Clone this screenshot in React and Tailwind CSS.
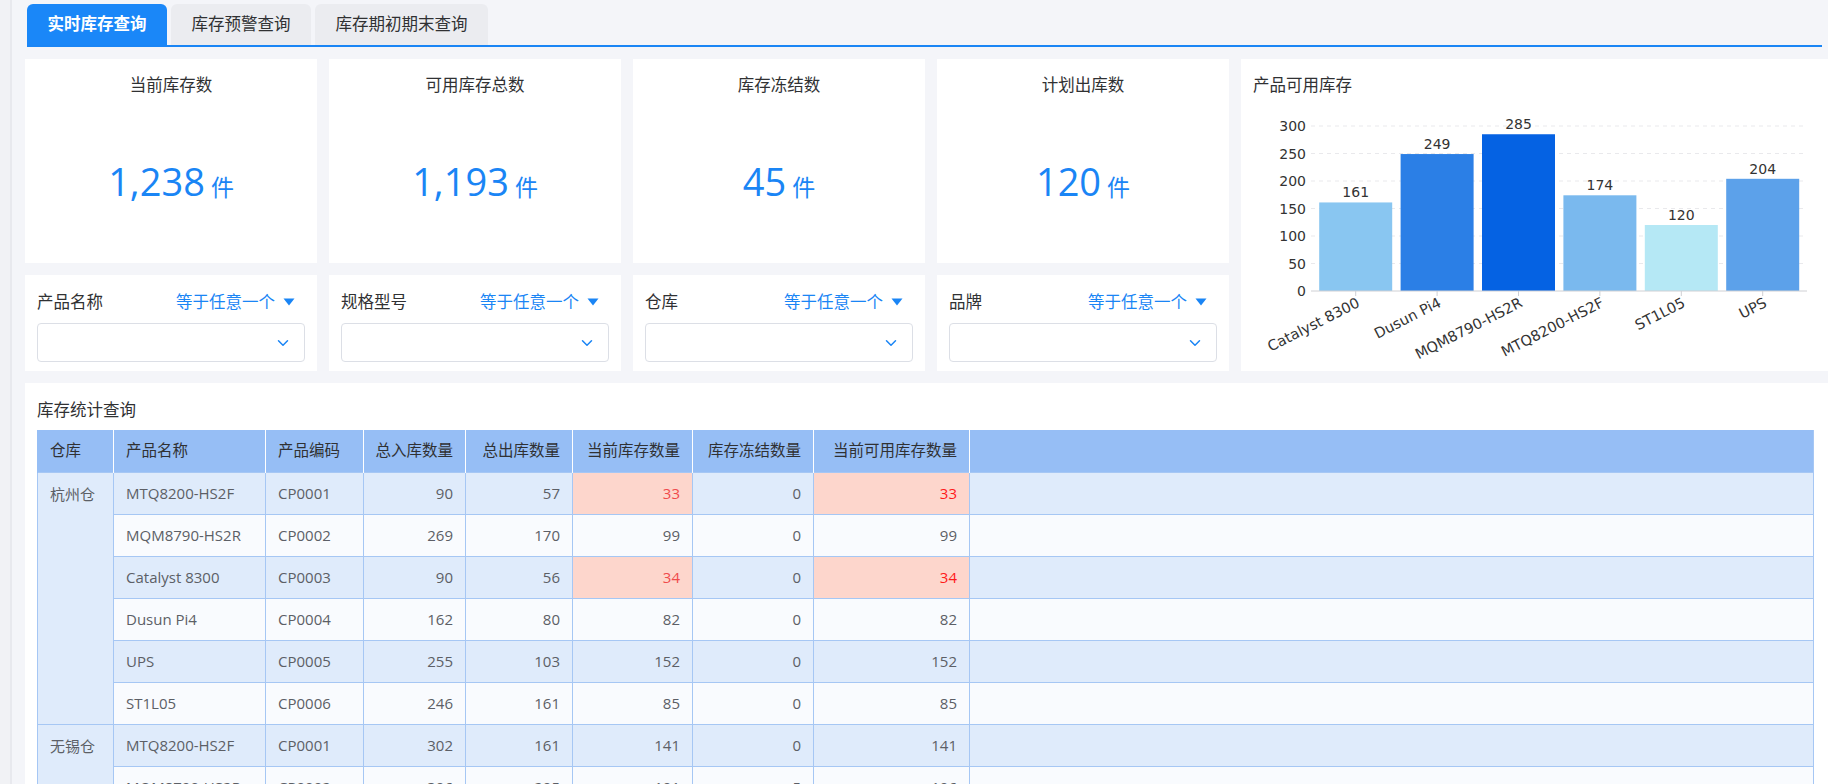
import React from 'react';
import { ChevronDown } from 'lucide-react';

const FONT = { fontFamily: '"Open Sans", "Noto Sans CJK SC", sans-serif' };

const tabs = ['实时库存查询', '库存预警查询', '库存期初期末查询'];

const stats = [
  { title: '当前库存数', value: '1,238' },
  { title: '可用库存总数', value: '1,193' },
  { title: '库存冻结数', value: '45' },
  { title: '计划出库数', value: '120' },
];

const filters = ['产品名称', '规格型号', '仓库', '品牌'];

const chartData = [
  { name: 'Catalyst 8300', value: 161, color: '#89c6f1' },
  { name: 'Dusun Pi4', value: 249, color: '#2b7fe6' },
  { name: 'MQM8790-HS2R', value: 285, color: '#0562e3' },
  { name: 'MTQ8200-HS2F', value: 174, color: '#7ab9ee' },
  { name: 'ST1L05', value: 120, color: '#b5e8f5' },
  { name: 'UPS', value: 204, color: '#5ca1ea' },
];

const groups = [
  {
    warehouse: '杭州仓',
    rows: [
      ['MTQ8200-HS2F', 'CP0001', 90, 57, 33, 0, 33, true],
      ['MQM8790-HS2R', 'CP0002', 269, 170, 99, 0, 99, false],
      ['Catalyst 8300', 'CP0003', 90, 56, 34, 0, 34, true],
      ['Dusun Pi4', 'CP0004', 162, 80, 82, 0, 82, false],
      ['UPS', 'CP0005', 255, 103, 152, 0, 152, false],
      ['ST1L05', 'CP0006', 246, 161, 85, 0, 85, false],
    ],
  },
  {
    warehouse: '无锡仓',
    rows: [
      ['MTQ8200-HS2F', 'CP0001', 302, 161, 141, 0, 141, false],
      ['MQM8790-HS2R', 'CP0002', 306, 205, 101, 5, 106, false],
    ],
  },
];

const headers = [
  { label: '仓库', align: 'left' },
  { label: '产品名称', align: 'left' },
  { label: '产品编码', align: 'left' },
  { label: '总入库数量', align: 'right' },
  { label: '总出库数量', align: 'right' },
  { label: '当前库存数量', align: 'right' },
  { label: '库存冻结数量', align: 'right' },
  { label: '当前可用库存数量', align: 'right' },
  { label: '', align: 'left' },
];

function StatCard({ title, value }) {
  return (
    <div className="flex flex-col items-center bg-white">
      <div className="pt-[14px] text-[16.5px] leading-[24px] text-[#303133]">{title}</div>
      <div className="mt-[60px] flex items-baseline gap-[6px] text-[#1a85f5]">
        <span className="text-[38px] leading-[48px]">{value}</span>
        <span className="text-[23px] leading-[30px]">件</span>
      </div>
    </div>
  );
}

function FilterCard({ label }) {
  return (
    <div className="flex flex-col bg-white px-[12px] pt-[16px]">
      <div className="flex h-[22px] items-center justify-between pr-[10px] text-[16.5px]">
        <span className="text-[#303133]">{label}</span>
        <span className="flex items-center gap-[8px] text-[#1a85f5]">
          等于任意一个
          <svg width="12" height="8" viewBox="0 0 12 8">
            <path d="M0.5 0.5 L11.5 0.5 L6 7.5 Z" fill="#1a85f5" />
          </svg>
        </span>
      </div>
      <div className="mt-[10px] flex h-[39px] items-center justify-end rounded-[4px] border border-[#dcdfe6] pr-[12px]">
        <ChevronDown size={18} strokeWidth={2} color="#1a85f5" />
      </div>
    </div>
  );
}

function ChartCard() {
  const y0 = 194;
  const k = 0.55;
  const left = 74;
  const step = 81.4;
  const barW = 73;
  const ticks = [0, 50, 100, 150, 200, 250, 300];
  const chartFont = '"DejaVu Sans", Verdana, sans-serif';
  return (
    <div className="col-start-5 row-span-2 row-start-1 flex flex-col bg-white">
      <div className="pl-[12px] pt-[14px] text-[16.5px] leading-[24px] text-[#303133]">产品可用库存</div>
      <svg width="587" height="274" viewBox="0 0 587 274" style={{ fontFamily: chartFont }}>
        {ticks.map((t) => (
          <g key={t}>
            {t > 0 && (
              <line x1="70" x2="566" y1={y0 - t * k} y2={y0 - t * k} stroke="#e9e9ec" strokeDasharray="4 4" />
            )}
            <text x="65" y={y0 - t * k} textAnchor="end" dominantBaseline="central" fontSize="14" fill="#333">
              {t}
            </text>
          </g>
        ))}
        {chartData.map((d, i) => {
          const cx = left + step * (i + 0.5);
          const top = y0 - d.value * k;
          return (
            <g key={d.name}>
              <rect x={cx - barW / 2} y={top} width={barW} height={d.value * k} fill={d.color} />
              <text x={cx} y={top - 5} textAnchor="middle" fontSize="14" fill="#333">
                {d.value}
              </text>
              <line x1={cx} x2={cx} y1={y0} y2={y0 + 5} stroke="#cfd0d4" />
              <text
                transform={`translate(${cx + 5} ${y0 + 15}) rotate(-27)`}
                textAnchor="end"
                fontSize="14.5"
                fill="#333"
              >
                {d.name}
              </text>
            </g>
          );
        })}
        <line x1="70" x2="566" y1={y0} y2={y0} stroke="#cfd0d4" />
      </svg>
    </div>
  );
}

function StockTable() {
  const widths = [76, 152, 98, 102, 107, 120, 121, 156];
  let rowIndex = 0;
  return (
    <table className="w-full table-fixed border-collapse text-[15px]">
      <colgroup>
        {widths.map((w, i) => (
          <col key={i} style={{ width: w }} />
        ))}
        <col />
      </colgroup>
      <thead>
        <tr className="h-[42px] bg-[#96bef5] text-[15.5px] text-[#303133]">
          {headers.map((h, i) => (
            <th
              key={i}
              className={`whitespace-nowrap border-x border-white pl-[8px] pr-[12px] font-normal first:border-l-[#96bef5] first:pl-[12px] last:border-r-[#a6c7f4] ${
                h.align === 'right' ? 'text-right' : 'text-left pl-[12px]'
              }`}
            >
              {h.label}
            </th>
          ))}
        </tr>
      </thead>
      <tbody className="text-[#5c5f66]">
        {groups.map((g) =>
          g.rows.map((r, j) => {
            const striped = rowIndex % 2 === 0;
            rowIndex += 1;
            const base = striped ? 'bg-[#dfebfb]' : 'bg-[#f9fbfe]';
            const hot = r[7];
            const cell = 'whitespace-nowrap border border-[#a6c7f4] px-[12px]';
            return (
              <tr key={g.warehouse + j} className={`h-[42px] ${base}`}>
                {j === 0 && (
                  <td rowSpan={g.rows.length} className={`${cell} bg-[#dfebfb] pt-[10px] align-top`}>
                    {g.warehouse}
                  </td>
                )}
                <td className={cell}>{r[0]}</td>
                <td className={cell}>{r[1]}</td>
                <td className={`${cell} text-right`}>{r[2]}</td>
                <td className={`${cell} text-right`}>{r[3]}</td>
                <td className={`${cell} text-right ${hot ? 'bg-[#fdd6cc] text-[#f04b4b]' : ''}`}>{r[4]}</td>
                <td className={`${cell} text-right`}>{r[5]}</td>
                <td className={`${cell} text-right ${hot ? 'bg-[#fdd6cc] text-[#ff1a1a]' : ''}`}>{r[6]}</td>
                <td className={cell}></td>
              </tr>
            );
          })
        )}
      </tbody>
    </table>
  );
}

export default function App() {
  return (
    <div className="flex h-[784px] w-[1828px] overflow-hidden bg-[#f4f5f9]" style={FONT}>
      <div className="w-[12px] shrink-0 border-r-2 border-[#e8e9ee] bg-[#f1f2f5]" />
      <div className="flex min-w-0 flex-1 flex-col pl-[13px]">
        <div className="ml-[2px] mr-[6px] mt-[4px] flex gap-[4px] border-b-2 border-[#1a85f5]">
          {tabs.map((t, i) => (
            <div
              key={t}
              className={`flex h-[41px] items-center justify-center rounded-t-[6px] text-[16.5px] ${
                i === 0
                  ? 'w-[140px] bg-[#1a87f8] font-bold text-white'
                  : i === 1
                  ? 'w-[140px] bg-[#ebecf0] text-[#303133]'
                  : 'w-[173px] bg-[#ebecf0] text-[#303133]'
              }`}
            >
              {t}
            </div>
          ))}
        </div>

        <div className="mt-[12px] grid grid-cols-[292px_292px_292px_292px_1fr] grid-rows-[204px_96px] gap-[12px]">
          {stats.map((s) => (
            <StatCard key={s.title} {...s} />
          ))}
          <ChartCard />
          {filters.map((f) => (
            <FilterCard key={f} label={f} />
          ))}
        </div>

        <div className="mt-[12px] flex-1 bg-white pl-[12px] pr-[14px] pt-[15px]">
          <div className="text-[16.5px] leading-[24px] text-[#303133]">库存统计查询</div>
          <div className="mt-[8px]">
            <StockTable />
          </div>
        </div>
      </div>
    </div>
  );
}
